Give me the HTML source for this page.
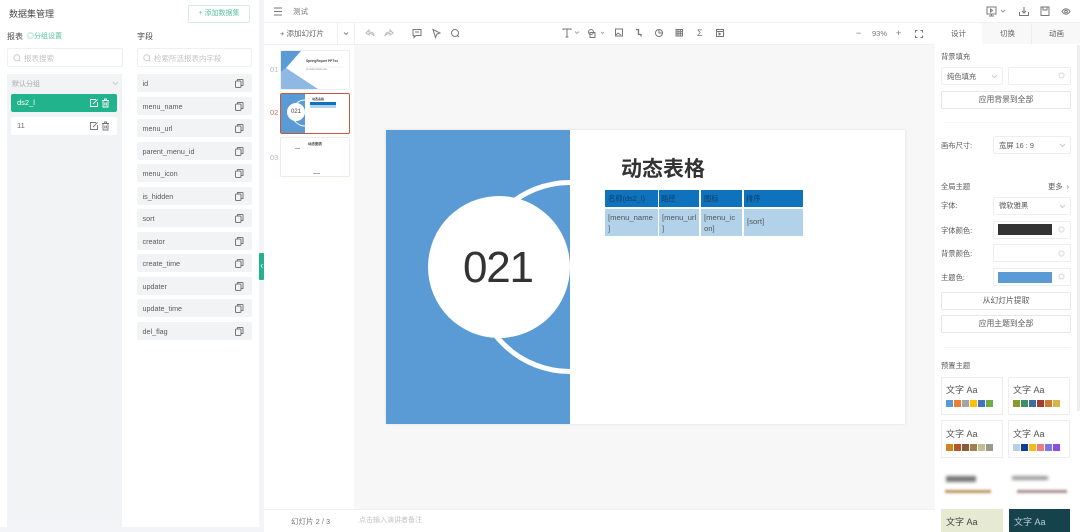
<!DOCTYPE html>
<html><head><meta charset="utf-8"><style>
*{box-sizing:border-box}
html,body{margin:0;padding:0;width:1080px;height:532px;overflow:hidden;background:#fff;font-family:"Liberation Sans","Noto Sans CJK SC",sans-serif;color:#666}
#root{position:absolute;left:0;top:0;width:1080px;height:532px;overflow:hidden;filter:blur(.35px)}
.a{position:absolute}
.t{position:absolute;white-space:nowrap;line-height:1}
.fld{position:absolute;left:137px;width:115px;height:18px;background:#f2f3f5;border-radius:2px;font-size:7.2px;line-height:19px;padding-left:5.500px;color:#5a5a5a}
.fld svg{position:absolute;left:97px;top:4px}
.btn{position:absolute;left:941px;width:130px;height:18px;border:1px solid #e8e8e8;border-radius:2px;font-size:7.800px;line-height:16px;text-align:center;color:#5a5a5a;background:#fff}
.inp{position:absolute;border:1px solid #eee;border-radius:2px;background:#fff}
.swatch{position:absolute;height:11px}
.lbl{position:absolute;font-size:7.300px;line-height:1;color:#5a5a5a;white-space:nowrap}
.th{position:absolute;border:1px solid #eee;border-radius:1px;background:#fff;width:62px;height:38px}
.th span.x{position:absolute;left:4px;top:7px;font-size:9px;color:#555;white-space:nowrap;line-height:1.2}
svg{display:block}
.ic{position:absolute}
.cell{position:absolute;font-size:7.700px;line-height:10.500px;color:#555;white-space:nowrap}
</style></head><body>
<div id="root">
<svg width="0" height="0" style="position:absolute"><defs>
<g id="cp" fill="none" stroke="#777" stroke-width="1"><rect x="1.500" y="3" width="5.500" height="6.500" rx="1"/><path d="M3.500 3V1.500h5a.5.5 0 0 1 .5.500V7.500H7"/></g>
</defs></svg>

<!-- left panel -->
<div class="a" style="left:0;top:0;width:259px;height:532px;background:#fff"></div>
<div class="a" style="left:259px;top:0;width:5px;height:532px;background:#f2f4f8"></div>
<div class="a" style="left:0;top:527px;width:264px;height:5px;background:#f2f4f8"></div>
<div class="t" style="left:9px;top:10px;font-size:9px;color:#4a4a4a">数据集管理</div>
<div class="a" style="left:188px;top:5px;width:62px;height:18px;border:1px solid #d3ebe3;border-radius:2px;font-size:7px;line-height:16px;text-align:center;color:#55c4a0">+ 添加数据集</div>
<div class="t" style="left:7px;top:33px;font-size:8px;color:#4a4a4a">报表</div>
<div class="t" style="left:27px;top:33px;font-size:7px;color:#55c4a0">◎分组设置</div>
<div class="t" style="left:137px;top:33px;font-size:8px;color:#4a4a4a">字段</div>
<div class="a" style="left:7px;top:48px;width:116px;height:19px;border:1px solid #f0f0f0;border-radius:2px"></div>
<svg class="ic" style="left:13px;top:54px" width="8" height="8"><circle cx="3.800" cy="3.800" r="3" fill="none" stroke="#ccc"/><path d="M6 6l1.500 1.500" stroke="#ccc"/></svg>
<div class="t" style="left:24px;top:54.500px;font-size:7.500px;color:#c4c4c4">报表搜索</div>
<div class="a" style="left:137px;top:48px;width:115px;height:19px;border:1px solid #f0f0f0;border-radius:2px"></div>
<svg class="ic" style="left:143px;top:54px" width="8" height="8"><circle cx="3.800" cy="3.800" r="3" fill="none" stroke="#ccc"/><path d="M6 6l1.500 1.500" stroke="#ccc"/></svg>
<div class="t" style="left:154px;top:54.500px;font-size:7.500px;color:#c4c4c4">检索所选报表内字段</div>
<div class="a" style="left:7px;top:74px;width:115px;height:453px;background:#f2f3f5"></div>
<div class="t" style="left:12px;top:80.500px;font-size:7px;color:#aaa">默认分组</div>
<svg class="ic" style="left:112px;top:81px" width="7" height="5"><path d="M1 1l2.500 2.500L6 1" fill="none" stroke="#ccc"/></svg>
<div class="a" style="left:11px;top:94px;width:106px;height:18px;background:#21b48c;border-radius:2px"></div>
<div class="t" style="left:17px;top:99px;font-size:7.500px;color:#fff">ds2_l</div>
<svg class="ic" style="left:89px;top:98px" width="21" height="10" fill="none" stroke="#fff" stroke-width=".9"><path d="M7 1.500H1.500v7h7V4M4 6l4.500-4.500"/><path d="M13 2.500h7M14 2.500v6.500h5V2.500M15.500 2.500V1h2v1.500M15.800 4.500v3M17.300 4.500v3"/></svg>
<div class="a" style="left:11px;top:117px;width:106px;height:18px;background:#fff;border-radius:2px"></div>
<div class="t" style="left:17px;top:122px;font-size:7.500px;color:#666">11</div>
<svg class="ic" style="left:89px;top:121px" width="21" height="10" fill="none" stroke="#777" stroke-width=".9"><path d="M7 1.500H1.500v7h7V4M4 6l4.500-4.500"/><path d="M13 2.500h7M14 2.500v6.500h5V2.500M15.500 2.500V1h2v1.500M15.800 4.500v3M17.300 4.500v3"/></svg>

<div class="fld" style="top:74px">id<svg width="10" height="11"><use href="#cp"/></svg></div>
<div class="fld" style="top:97px">menu_name<svg width="10" height="11"><use href="#cp"/></svg></div>
<div class="fld" style="top:119px">menu_url<svg width="10" height="11"><use href="#cp"/></svg></div>
<div class="fld" style="top:142px">parent_menu_id<svg width="10" height="11"><use href="#cp"/></svg></div>
<div class="fld" style="top:164px">menu_icon<svg width="10" height="11"><use href="#cp"/></svg></div>
<div class="fld" style="top:187px">is_hidden<svg width="10" height="11"><use href="#cp"/></svg></div>
<div class="fld" style="top:209px">sort<svg width="10" height="11"><use href="#cp"/></svg></div>
<div class="fld" style="top:232px">creator<svg width="10" height="11"><use href="#cp"/></svg></div>
<div class="fld" style="top:254px">create_time<svg width="10" height="11"><use href="#cp"/></svg></div>
<div class="fld" style="top:277px">updater<svg width="10" height="11"><use href="#cp"/></svg></div>
<div class="fld" style="top:299px">update_time<svg width="10" height="11"><use href="#cp"/></svg></div>
<div class="fld" style="top:322px">del_flag<svg width="10" height="11"><use href="#cp"/></svg></div>
<div class="a" style="left:259px;top:253px;width:5px;height:27px;background:#21b48c;border-radius:1px"></div>
<svg class="ic" style="left:260px;top:263px" width="3" height="6"><path d="M2.500 1L1 3l1.500 2" fill="none" stroke="#dff" stroke-width=".7"/></svg>

<!-- top bar -->
<svg class="ic" style="left:273px;top:7px" width="10" height="9"><path d="M1 1h8M1 4.500h8M1 8h8" stroke="#777"/></svg>
<div class="t" style="left:293px;top:7.500px;font-size:7.500px;color:#777">测试</div>
<div class="a" style="left:264px;top:22px;width:816px;height:1px;background:#f0f0f0"></div>
<svg class="ic" style="left:986px;top:6px" width="88" height="11" fill="none" stroke="#777" stroke-width="1"><rect x="1" y="1" width="9" height="7"/><path d="M5.500 8v2M3 10h5M4.500 3l2 1.500-2 1.500z"/><path d="M15 4l2 2 2-2" stroke="#999"/><path d="M38 1v6M36 5l2 2 2-2M33.500 6v3.500h9V6"/><rect x="55" y="1" width="8" height="8.500"/><path d="M57 1v3h4V1"/><path d="M76 5.500c2-3.500 6-3.500 8 0-2 3.500-6 3.500-8 0z"/><circle cx="80" cy="5.500" r="1.300"/></svg>

<!-- toolbar -->
<div class="a" style="left:264px;top:44px;width:670px;height:1px;background:#f0f0f0"></div>
<div class="t" style="left:280px;top:30px;font-size:7.500px;color:#666">+ 添加幻灯片</div>
<div class="a" style="left:337px;top:23px;width:1px;height:21px;background:#f0f0f0"></div>
<div class="a" style="left:354px;top:23px;width:1px;height:21px;background:#f0f0f0"></div>
<svg class="ic" style="left:343px;top:32px" width="6" height="4"><path d="M1 .5l2 2 2-2" fill="none" stroke="#888"/></svg>
<svg class="ic" style="left:364px;top:27px" width="100" height="13" fill="none" stroke-width="1"><path d="M2 6l3-3v2c3 0 5 1 5 4-1-2-3-2.500-5-2.500V8z" stroke="#bbb"/><path d="M29 6l-3-3v2c-3 0-5 1-5 4 1-2 3-2.500 5-2.500V8z" stroke="#bbb"/><path d="M49 2.500h8v6h-5l-2 2v-2h-1zM51 5h4" stroke="#777"/><path d="M69 2.500l7 3.500-3 1-1.500 3.500z" stroke="#777"/><circle cx="91" cy="6" r="3.500" stroke="#777"/><path d="M93.500 8.500L95 10" stroke="#777"/></svg>
<svg class="ic" style="left:562px;top:28px" width="130" height="12" fill="none" stroke="#777" stroke-width="1"><path d="M1 2V1h8v1M5 1v8M3.500 9h3"/><path d="M13 3.500l2 2 2-2" stroke="#aaa"/><circle cx="29" cy="4" r="2.500"/><rect x="28" y="4.500" width="5" height="5"/><path d="M39 4l1.500 1.500L42 4" stroke="#aaa"/><rect x="53.500" y="1" width="7" height="7"/><path d="M54 7l2-2 3 2"/><path d="M74 1.500h2.500v5H79v2" stroke-width="1.300"/><circle cx="97" cy="5" r="3.500"/><path d="M97 1.500V5h3.500"/><rect x="114" y="1.500" width="6.500" height="6.500"/><path d="M116 1.500v6.500M118.300 1.500v6.500M114 3.700h6.500M114 5.800h6.500"/></svg>
<div class="t" style="left:697px;top:29px;font-size:9px;color:#777">Σ</div>
<svg class="ic" style="left:716px;top:29px" width="9" height="9" fill="none" stroke="#777"><rect x=".5" y=".5" width="7" height="7"/><path d="M.5 2.500h7M3 4l1.500 1L3 6z"/></svg>
<div class="t" style="left:856px;top:29px;font-size:9px;color:#777">−</div>
<div class="t" style="left:872px;top:30px;font-size:7.500px;color:#777">93%</div>
<div class="t" style="left:896px;top:29px;font-size:9px;color:#777">+</div>
<svg class="ic" style="left:915px;top:30px" width="8" height="8" fill="none" stroke="#777"><path d="M.5 2.500v-2h2M5.500.5h2v2M7.500 5.500v2h-2M2.500 7.500h-2v-2"/></svg>

<!-- thumbs -->
<div class="a" style="left:354px;top:45px;width:581px;height:464px;background:#f7f7f7"></div>
<div class="t" style="left:270px;top:66px;font-size:7.500px;color:#bbb">01</div>
<div class="t" style="left:270px;top:109px;font-size:7.500px;color:#c87460">02</div>
<div class="t" style="left:270px;top:154px;font-size:7.500px;color:#bbb">03</div>
<div class="a" style="left:280px;top:50px;width:70px;height:40px;border:1px solid #eee;border-radius:2px;overflow:hidden;background:#fff">
<svg width="68" height="38"><polygon points="0,0 20,0 5,17 0,21" fill="#5b9bd5"/><polygon points="5,17 37,38 0,38 0,21" fill="#8fb8e3"/><line x1="25" y1="16" x2="62" y2="16" stroke="#e4e4e4" stroke-width=".5"/></svg>
<div class="t" style="left:25px;top:9px;font-size:3.300px;font-weight:bold;color:#444">SpringReport PPTxx</div>
<div class="t" style="left:25px;top:18px;font-size:2.500px;color:#777">xx xxxxx xxxxx xxx</div>
</div>
<div class="a" style="left:280px;top:93px;width:70px;height:41px;border:1px solid #c4593f;border-radius:2px;overflow:hidden;background:#fff">
<svg width="68" height="39"><rect width="24" height="39" fill="#5b9bd5"/><path d="M24 6A13 13 0 0 0 24 32" fill="#5b9bd5" stroke="#fff"/><circle cx="15" cy="18" r="9" fill="#fff"/></svg>
<div class="t" style="left:10px;top:15px;font-size:6px;color:#444">021</div>
<div class="t" style="left:31px;top:4px;font-size:3px;font-weight:bold;color:#444">动态表格</div>
<div class="a" style="left:29px;top:8px;width:26px;height:2.500px;background:#0e72bd"></div>
<div class="a" style="left:29px;top:10.500px;width:26px;height:3.500px;background:#b2d2ea"></div>
</div>
<div class="a" style="left:280px;top:137px;width:70px;height:40px;border:1px solid #f3e8e4;border-radius:2px;background:#fff">
<div class="t" style="left:27px;top:5px;font-size:3.500px;font-weight:bold;color:#444">动态图表</div>
<div class="a" style="left:14px;top:10px;width:5px;height:.5px;background:#aaa"></div>
<div class="a" style="left:32px;top:35px;width:7px;height:.5px;background:#aaa"></div>
</div>

<!-- slide -->
<div class="a" style="left:386px;top:130px;width:519px;height:294px;background:#fff;box-shadow:0 0 3px rgba(0,0,0,.1);overflow:hidden">
<svg width="519" height="294" class="a" style="left:0;top:0"><rect width="184" height="294" fill="#5b9bd5"/><path d="M184 52.500A94.500 94.500 0 0 0 184 241.500" fill="none" stroke="#fff" stroke-width="5"/><circle cx="113" cy="137" r="71" fill="#fff"/></svg>
<div class="t" style="left:77px;top:116px;font-size:44px;letter-spacing:-1.200px;color:#333;font-family:'Liberation Sans',sans-serif">021</div>
<div class="t" style="left:235px;top:29px;font-size:21px;font-weight:bold;color:#333">动态表格</div>
</div>
<!-- table -->
<div class="a" style="left:605px;top:190px;width:53px;height:17px;background:#0e72bd"></div>
<div class="a" style="left:659px;top:190px;width:40px;height:17px;background:#0e72bd"></div>
<div class="a" style="left:701px;top:190px;width:41px;height:17px;background:#0e72bd"></div>
<div class="a" style="left:744px;top:190px;width:59px;height:17px;background:#0e72bd"></div>
<div class="a" style="left:605px;top:209px;width:53px;height:27px;background:#b2d2ea"></div>
<div class="a" style="left:659px;top:209px;width:40px;height:27px;background:#b2d2ea"></div>
<div class="a" style="left:701px;top:209px;width:41px;height:27px;background:#b2d2ea"></div>
<div class="a" style="left:744px;top:209px;width:59px;height:27px;background:#b2d2ea"></div>
<div class="t" style="left:608px;top:194.500px;font-size:7.300px;color:#123f68">名称(ds2_l)</div>
<div class="t" style="left:661px;top:194.500px;font-size:7.300px;color:#123f68">路径</div>
<div class="t" style="left:704px;top:194.500px;font-size:7.300px;color:#123f68">图标</div>
<div class="t" style="left:746px;top:194.500px;font-size:7.300px;color:#123f68">排序</div>
<div class="cell" style="left:608px;top:213px">[menu_name<br>]</div>
<div class="cell" style="left:662px;top:213px">[menu_url<br>]</div>
<div class="cell" style="left:704px;top:213px">[menu_ic<br>on]</div>
<div class="cell" style="left:747px;top:217px">[sort]</div>

<!-- bottom bar -->
<div class="a" style="left:264px;top:509px;width:671px;height:1px;background:#f0f0f0"></div>
<div class="a" style="left:264px;top:510px;width:671px;height:22px;background:#fff"></div>
<div class="t" style="left:291px;top:517.500px;font-size:7.500px;color:#777">幻灯片 2 / 3</div>
<div class="t" style="left:359px;top:516.500px;font-size:7px;color:#c4c4c4">点击输入演讲者备注</div>

<!-- right panel -->
<div class="a" style="left:935px;top:23px;width:145px;height:509px;background:#fff"></div>
<div class="a" style="left:982px;top:23px;width:98px;height:21px;background:#f8f8f8"></div>
<div class="a" style="left:1031px;top:23px;width:1px;height:21px;background:#eee"></div>
<div class="a" style="left:1077px;top:45px;width:3px;height:366px;background:#eee"></div>
<div class="t" style="left:951px;top:30px;font-size:7.500px;color:#666">设计</div>
<div class="t" style="left:1000px;top:30px;font-size:7.500px;color:#666">切换</div>
<div class="t" style="left:1049px;top:30px;font-size:7.500px;color:#666">动画</div>
<div class="lbl" style="left:941px;top:53px">背景填充</div>
<div class="inp" style="left:941px;top:67px;width:62px;height:18px"></div>
<div class="lbl" style="left:947px;top:73px">纯色填充</div>
<svg class="ic" style="left:991px;top:74px" width="7" height="5"><path d="M1 1l2.500 2.500L6 1" fill="none" stroke="#ccc"/></svg>
<div class="inp" style="left:1008px;top:67px;width:63px;height:18px"></div>
<div class="btn" style="top:91px">应用背景到全部</div>
<div class="a" style="left:944px;top:122px;width:127px;height:1px;background:#f4f4f4"></div>
<div class="lbl" style="left:941px;top:142px">画布尺寸:</div>
<div class="inp" style="left:993px;top:136px;width:78px;height:18px"></div>
<div class="lbl" style="left:999px;top:142px">宽屏 16 : 9</div>
<svg class="ic" style="left:1059px;top:143px" width="7" height="5"><path d="M1 1l2.500 2.500L6 1" fill="none" stroke="#ccc"/></svg>
<div class="lbl" style="left:941px;top:183px">全局主题</div>
<div class="lbl" style="left:1048px;top:183px">更多 &nbsp;›</div>
<div class="lbl" style="left:941px;top:202px">字体:</div>
<div class="inp" style="left:993px;top:197px;width:78px;height:18px"></div>
<div class="lbl" style="left:999px;top:202px">微软雅黑</div>
<svg class="ic" style="left:1059px;top:204px" width="7" height="5"><path d="M1 1l2.500 2.500L6 1" fill="none" stroke="#ccc"/></svg>
<div class="lbl" style="left:941px;top:227px">字体颜色:</div>
<div class="inp" style="left:993px;top:221px;width:78px;height:18px"></div>
<div class="swatch" style="left:998px;top:224px;width:54px;background:#333"></div>
<div class="lbl" style="left:941px;top:250px">背景颜色:</div>
<div class="inp" style="left:993px;top:244px;width:78px;height:18px"></div>
<div class="lbl" style="left:941px;top:274px">主题色:</div>
<div class="inp" style="left:993px;top:268px;width:78px;height:18px"></div>
<div class="swatch" style="left:998px;top:272px;width:54px;background:#5b9bd5"></div>
<div class="btn" style="top:292px">从幻灯片提取</div>
<div class="btn" style="top:315px">应用主题到全部</div>
<div class="a" style="left:944px;top:347px;width:127px;height:1px;background:#f4f4f4"></div>
<div class="lbl" style="left:941px;top:362px">预置主题</div>
<svg class="ic" style="left:1058px;top:72px" width="7" height="7"><circle cx="3.500" cy="3.500" r="2.500" fill="none" stroke="#ddd" stroke-width="1.200"/></svg>
<svg class="ic" style="left:1058px;top:226px" width="7" height="7"><circle cx="3.500" cy="3.500" r="2.500" fill="none" stroke="#ddd" stroke-width="1.200"/></svg>
<svg class="ic" style="left:1058px;top:250px" width="7" height="7"><circle cx="3.500" cy="3.500" r="2.500" fill="none" stroke="#ddd" stroke-width="1.200"/></svg>
<svg class="ic" style="left:1058px;top:273px" width="7" height="7"><circle cx="3.500" cy="3.500" r="2.500" fill="none" stroke="#ddd" stroke-width="1.200"/></svg>

<div class="th" style="left:941px;top:377px"><span class="x">文字 Aa</span>
<svg class="a" style="left:4px;top:22px" width="54" height="8"><rect x="0" width="7" height="7" fill="#5b9bd5"/><rect x="8" width="7" height="7" fill="#ed7d31"/><rect x="16" width="7" height="7" fill="#a5a5a5"/><rect x="24" width="7" height="7" fill="#ffc000"/><rect x="32" width="7" height="7" fill="#4472c4"/><rect x="40" width="7" height="7" fill="#70ad47"/></svg></div>
<div class="th" style="left:1008px;top:377px"><span class="x">文字 Aa</span>
<svg class="a" style="left:4px;top:22px" width="54" height="8"><rect x="0" width="7" height="7" fill="#8a9a2b"/><rect x="8" width="7" height="7" fill="#3f9068"/><rect x="16" width="7" height="7" fill="#3c6f9c"/><rect x="24" width="7" height="7" fill="#a33b2e"/><rect x="32" width="7" height="7" fill="#cf7a30"/><rect x="40" width="7" height="7" fill="#d9b44a"/></svg></div>
<div class="th" style="left:941px;top:420px"><span class="x" style="top:8px">文字 Aa</span>
<svg class="a" style="left:4px;top:23px" width="54" height="8"><rect x="0" width="7" height="7" fill="#d0861c"/><rect x="8" width="7" height="7" fill="#b5562a"/><rect x="16" width="7" height="7" fill="#8a5a3c"/><rect x="24" width="7" height="7" fill="#a08050"/><rect x="32" width="7" height="7" fill="#bfbf8f"/><rect x="40" width="7" height="7" fill="#9a9a8a"/></svg></div>
<div class="th" style="left:1008px;top:420px"><span class="x" style="top:8px">文字 Aa</span>
<svg class="a" style="left:4px;top:23px" width="54" height="8"><rect x="0" width="7" height="7" fill="#b8cfe4"/><rect x="8" width="7" height="7" fill="#0b3f9c"/><rect x="16" width="7" height="7" fill="#f5bb1a"/><rect x="24" width="7" height="7" fill="#f07a7a"/><rect x="32" width="7" height="7" fill="#7a78e0"/><rect x="40" width="7" height="7" fill="#8a4ee0"/></svg></div>
<!-- smeared row -->
<div class="a" style="left:946px;top:476px;width:30px;height:6px;background:#777;filter:blur(1.500px)"></div>
<div class="a" style="left:945px;top:490px;width:46px;height:3px;background:#b8945a;filter:blur(1.200px)"></div>
<div class="a" style="left:1012px;top:476px;width:36px;height:4px;background:#999;filter:blur(1.500px)"></div>
<div class="a" style="left:1017px;top:490px;width:50px;height:3px;background:#a58a8a;filter:blur(1.200px)"></div>
<div class="a" style="left:941px;top:509px;width:62px;height:23px;background:#e6ead3"></div>
<div class="t" style="left:946px;top:517.500px;font-size:9px;color:#444">文字 Aa</div>
<div class="a" style="left:1009px;top:509px;width:61px;height:23px;background:#16424c"></div>
<div class="t" style="left:1014px;top:517.500px;font-size:9px;color:#bcd">文字 Aa</div>
</div>
</body></html>
